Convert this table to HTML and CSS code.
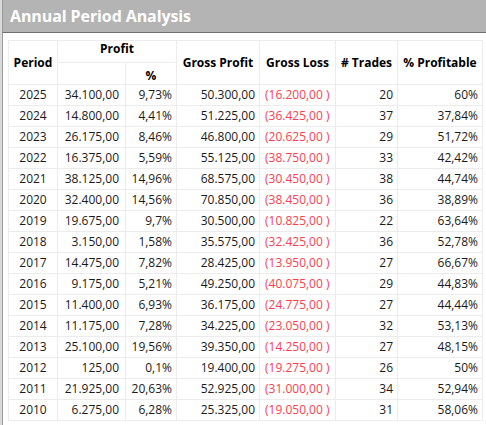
FILE: index.html
```html
<!DOCTYPE html>
<html>
<head>
<meta charset="utf-8">
<link rel="stylesheet" href="styles.css">
</head>
<body>
<div class="panel">
  <div class="titlebar"><span class="title">Annual Period Analysis</span></div>
  <div class="content">
    <table class="grid">
      <colgroup>
        <col class="c-period"><col class="c-profit"><col class="c-pct"><col class="c-gp"><col class="c-gl"><col class="c-tr"><col class="c-pf">
      </colgroup>
      <thead>
        <tr>
          <th rowspan="2">Period</th>
          <th colspan="2" class="h-top">Profit</th>
          <th rowspan="2">Gross Profit</th>
          <th rowspan="2">Gross Loss</th>
          <th rowspan="2"># Trades</th>
          <th rowspan="2">% Profitable</th>
        </tr>
        <tr>
          <th class="h-sub"></th>
          <th class="h-sub">%</th>
        </tr>
      </thead>
      <tbody>
        <tr><td class="yr">2025</td><td class="num p">34.100,00</td><td class="num">9,73%</td><td class="num">50.300,00</td><td class="loss">(16.200,00 )</td><td class="num">20</td><td class="num">60%</td></tr>
        <tr><td class="yr">2024</td><td class="num p">14.800,00</td><td class="num">4,41%</td><td class="num">51.225,00</td><td class="loss">(36.425,00 )</td><td class="num">37</td><td class="num">37,84%</td></tr>
        <tr><td class="yr">2023</td><td class="num p">26.175,00</td><td class="num">8,46%</td><td class="num">46.800,00</td><td class="loss">(20.625,00 )</td><td class="num">29</td><td class="num">51,72%</td></tr>
        <tr><td class="yr">2022</td><td class="num p">16.375,00</td><td class="num">5,59%</td><td class="num">55.125,00</td><td class="loss">(38.750,00 )</td><td class="num">33</td><td class="num">42,42%</td></tr>
        <tr><td class="yr">2021</td><td class="num p">38.125,00</td><td class="num">14,96%</td><td class="num">68.575,00</td><td class="loss">(30.450,00 )</td><td class="num">38</td><td class="num">44,74%</td></tr>
        <tr><td class="yr">2020</td><td class="num p">32.400,00</td><td class="num">14,56%</td><td class="num">70.850,00</td><td class="loss">(38.450,00 )</td><td class="num">36</td><td class="num">38,89%</td></tr>
        <tr><td class="yr">2019</td><td class="num p">19.675,00</td><td class="num">9,7%</td><td class="num">30.500,00</td><td class="loss">(10.825,00 )</td><td class="num">22</td><td class="num">63,64%</td></tr>
        <tr><td class="yr">2018</td><td class="num p">3.150,00</td><td class="num">1,58%</td><td class="num">35.575,00</td><td class="loss">(32.425,00 )</td><td class="num">36</td><td class="num">52,78%</td></tr>
        <tr><td class="yr">2017</td><td class="num p">14.475,00</td><td class="num">7,82%</td><td class="num">28.425,00</td><td class="loss">(13.950,00 )</td><td class="num">27</td><td class="num">66,67%</td></tr>
        <tr><td class="yr">2016</td><td class="num p">9.175,00</td><td class="num">5,21%</td><td class="num">49.250,00</td><td class="loss">(40.075,00 )</td><td class="num">29</td><td class="num">44,83%</td></tr>
        <tr><td class="yr">2015</td><td class="num p">11.400,00</td><td class="num">6,93%</td><td class="num">36.175,00</td><td class="loss">(24.775,00 )</td><td class="num">27</td><td class="num">44,44%</td></tr>
        <tr><td class="yr">2014</td><td class="num p">11.175,00</td><td class="num">7,28%</td><td class="num">34.225,00</td><td class="loss">(23.050,00 )</td><td class="num">32</td><td class="num">53,13%</td></tr>
        <tr><td class="yr">2013</td><td class="num p">25.100,00</td><td class="num">19,56%</td><td class="num">39.350,00</td><td class="loss">(14.250,00 )</td><td class="num">27</td><td class="num">48,15%</td></tr>
        <tr><td class="yr">2012</td><td class="num p">125,00</td><td class="num">0,1%</td><td class="num">19.400,00</td><td class="loss">(19.275,00 )</td><td class="num">26</td><td class="num">50%</td></tr>
        <tr><td class="yr">2011</td><td class="num p">21.925,00</td><td class="num">20,63%</td><td class="num">52.925,00</td><td class="loss">(31.000,00 )</td><td class="num">34</td><td class="num">52,94%</td></tr>
        <tr><td class="yr">2010</td><td class="num p">6.275,00</td><td class="num">6,28%</td><td class="num">25.325,00</td><td class="loss">(19.050,00 )</td><td class="num">31</td><td class="num">58,06%</td></tr>
      </tbody>
    </table>
  </div>
</div>
</body>
</html>
```

FILE: styles.css
```css
html, body {
  margin: 0;
  padding: 0;
  background: #ffffff;
}

body {
  width: 486px;
  height: 425px;
  overflow: hidden;
  font-family: "Open Sans", "Noto Sans", "DejaVu Sans", sans-serif;
}

.panel {
  height: 425px;
  border-left: 2px solid #d9d9d9;
  box-sizing: border-box;
}

.titlebar {
  height: 32px;
  background: #b4b4b4;
  border-bottom: 1px solid #6f6f6f;
  border-left: 1px solid #9a9a9a;
  display: flex;
  align-items: center;
  padding-left: 7px;
}

.title {
  color: #ffffff;
  font-weight: 700;
  font-size: 16px;
  letter-spacing: -0.1px;
  line-height: 1;
}

.content {
  height: 392px;
  border-left: 1px solid #9a9a9a;
  padding-left: 5px;
  padding-top: 7px;
}

.grid {
  border-collapse: collapse;
  table-layout: fixed;
  width: 474px;
  font-size: 12px;
  color: #1a1a1a;
}

.c-period { width: 49px; }
.c-profit { width: 68px; }
.c-pct { width: 51px; }
.c-gp { width: 83px; }
.c-gl { width: 76px; }
.c-tr { width: 62px; }
.c-pf { width: 85px; }

.grid th,
.grid td {
  border: 1px solid #ececec;
  height: 20px;
  padding: 0 4px;
  white-space: nowrap;
  line-height: 14px;
}

.grid th {
  font-weight: 700;
  color: #000000;
  text-align: center;
  vertical-align: middle;
  padding: 0 2px;
}

.grid th.h-top { vertical-align: top; padding-top: 1px; }
.grid th.h-sub { vertical-align: bottom; padding-bottom: 1px; }

.grid td.yr { text-align: center; }
.grid td.num { text-align: right; }
.grid td.p { padding-right: 6px; }
.grid td.loss {
  text-align: left;
  color: #ff3c50;
  padding-left: 5px;
}
```
